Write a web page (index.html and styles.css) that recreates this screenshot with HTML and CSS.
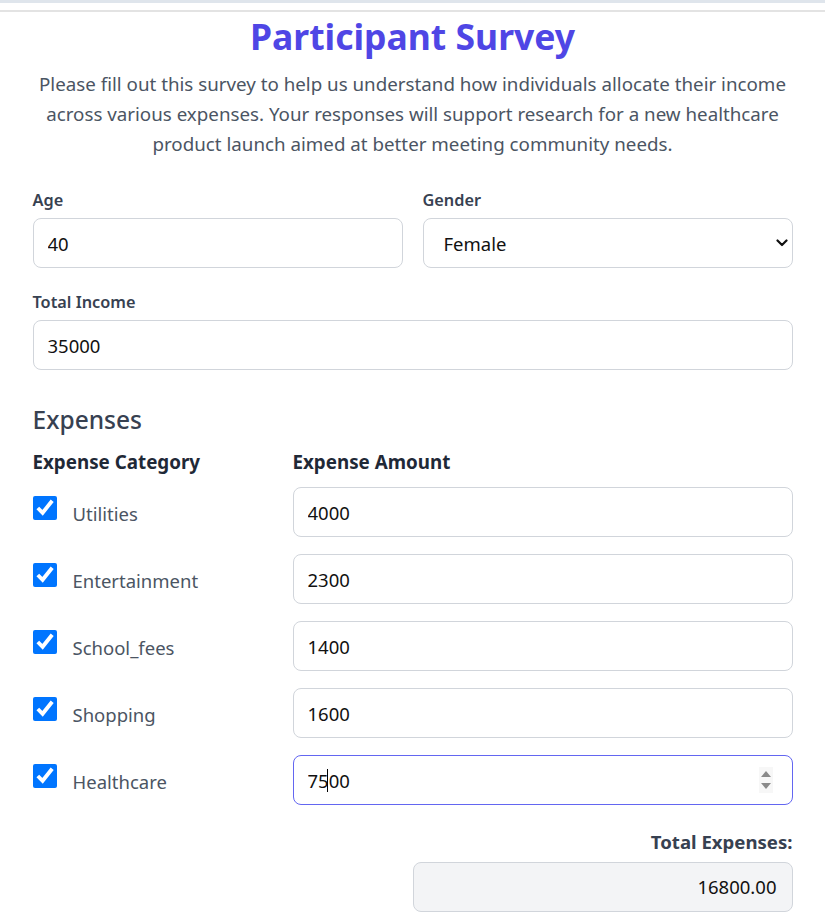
FILE: index.html
```html
<!DOCTYPE html>
<html lang="en">
<head>
<meta charset="utf-8">
<title>Participant Survey</title>
<link rel="stylesheet" href="styles.css">
</head>
<body>
<div class="strip"></div>
<div class="rule"></div>
<main class="survey">
  <h1 class="title">Participant Survey</h1>
  <p class="intro">Please fill out this survey to help us understand how individuals allocate their income across various expenses. Your responses will support research for a new healthcare product launch aimed at better meeting community needs.</p>

  <div class="row-2">
    <div class="field">
      <label class="label" for="age">Age</label>
      <input class="input" id="age" type="text" value="40">
    </div>
    <div class="field">
      <label class="label" for="gender">Gender</label>
      <div class="select-wrap">
        <select class="input select" id="gender">
          <option>Female</option>
          <option>Male</option>
        </select>
        <svg class="chev" width="12" height="8" viewBox="0 0 12 8"><path d="M1.5 1.5 L6 6 L10.5 1.5" fill="none" stroke="#111" stroke-width="2.2" stroke-linecap="round" stroke-linejoin="round"/></svg>
      </div>
    </div>
  </div>

  <div class="field">
    <label class="label" for="income">Total Income</label>
    <input class="input" id="income" type="text" value="35000">
  </div>

  <h2 class="section">Expenses</h2>
  <div class="exp-grid">
    <div class="col-head">Expense Category</div>
    <div class="col-head">Expense Amount</div>

    <label class="cat"><input class="check" type="checkbox" checked><span class="cat-name">Utilities</span></label>
    <input class="input" type="text" value="4000">

    <label class="cat"><input class="check" type="checkbox" checked><span class="cat-name">Entertainment</span></label>
    <input class="input" type="text" value="2300">

    <label class="cat"><input class="check" type="checkbox" checked><span class="cat-name">School_fees</span></label>
    <input class="input" type="text" value="1400">

    <label class="cat"><input class="check" type="checkbox" checked><span class="cat-name">Shopping</span></label>
    <input class="input" type="text" value="1600">

    <label class="cat"><input class="check" type="checkbox" checked><span class="cat-name">Healthcare</span></label>
    <div class="focus-wrap">
      <input class="input focused" type="text" value="7500">
      <span class="caret"></span>
      <svg class="spin" width="14" height="26" viewBox="0 0 14 26"><rect width="14" height="26" fill="#f7f7f7"/><path d="M2 10 L7 4 L12 10 Z" fill="#8a8a8a"/><path d="M2 16 L7 22 L12 16 Z" fill="#8a8a8a"/></svg>
    </div>
  </div>

  <div class="total">
    <div class="total-label">Total Expenses:</div>
    <div class="total-box">16800.00</div>
  </div>
</main>
</body>
</html>
```
FILE: styles.css
```css
* { box-sizing: border-box; }
body {
  margin: 0;
  background: #ffffff;
  font-family: "Noto Sans", "Open Sans", sans-serif;
  color: #374151;
}
.strip { height: 3px; background: #dfe5ec; }
.rule { height: 2px; background: #e3e3e3; margin-top: 7px; }
.survey {
  width: 760px;
  margin: 0 auto;
  padding-bottom: 20px;
}
.title {
  margin: 2px 0 0;
  text-align: center;
  font-size: 35.5px;
  line-height: 44px;
  font-weight: 700;
  color: #4f46e5;
}
.intro {
  margin: 11px 0 0;
  text-align: center;
  font-size: 18.75px;
  line-height: 30px;
  color: #4b5563;
}
.row-2 {
  display: grid;
  grid-template-columns: 1fr 1fr;
  gap: 20px;
  margin-top: 29px;
}
.field { display: flex; flex-direction: column; }
.row-2 + .field { margin-top: 22px; }
.label {
  font-size: 16.3px;
  line-height: 24px;
  font-weight: 600;
  color: #374151;
  margin-bottom: 6px;
}
.input {
  width: 100%;
  height: 50px;
  border: 1px solid #d1d5db;
  border-radius: 8px;
  padding: 0 14px;
  font-family: inherit;
  font-size: 18.5px;
  color: #111111;
  background: #ffffff;
  outline: none;
}
.select-wrap { position: relative; }
.select { appearance: none; -webkit-appearance: none; padding-left: 20px; }
.chev { position: absolute; right: 5px; top: 21px; pointer-events: none; }
.section {
  margin: 34px 0 0;
  font-size: 24.5px;
  line-height: 32px;
  font-weight: 500;
  color: #374151;
}
.exp-grid {
  display: grid;
  grid-template-columns: 240px 1fr;
  column-gap: 20px;
  row-gap: 17px;
  margin-top: 14px;
}
.col-head {
  font-size: 18.8px;
  line-height: 24px;
  font-weight: 700;
  color: #1f2937;
  margin-bottom: -4px;
}
.cat {
  display: flex;
  align-items: flex-start;
  gap: 16px;
  height: 50px;
}
.check {
  width: 24px;
  height: 24px;
  margin: 9px 0 0;
  accent-color: #0075ff;
}
.cat-name {
  margin-top: 15px;
  font-size: 18.5px;
  line-height: 24px;
  color: #4b5563;
}
.focus-wrap { position: relative; }
.focused { border-color: #6366f1; }
.caret {
  position: absolute;
  left: 34px;
  top: 14px;
  width: 1px;
  height: 23px;
  background: #000;
}
.spin { position: absolute; right: 20px; top: 12px; }
.total {
  display: flex;
  flex-direction: column;
  align-items: flex-end;
  margin-top: 25px;
}
.total-label {
  font-size: 18.6px;
  line-height: 24px;
  font-weight: 700;
  color: #374151;
  margin-bottom: 8px;
}
.total-box {
  width: 380px;
  height: 50px;
  border: 1px solid #d1d5db;
  border-radius: 8px;
  background: #f3f4f6;
  text-align: right;
  padding: 0 15px;
  font-size: 18.5px;
  line-height: 48px;
  color: #111111;
}
```
